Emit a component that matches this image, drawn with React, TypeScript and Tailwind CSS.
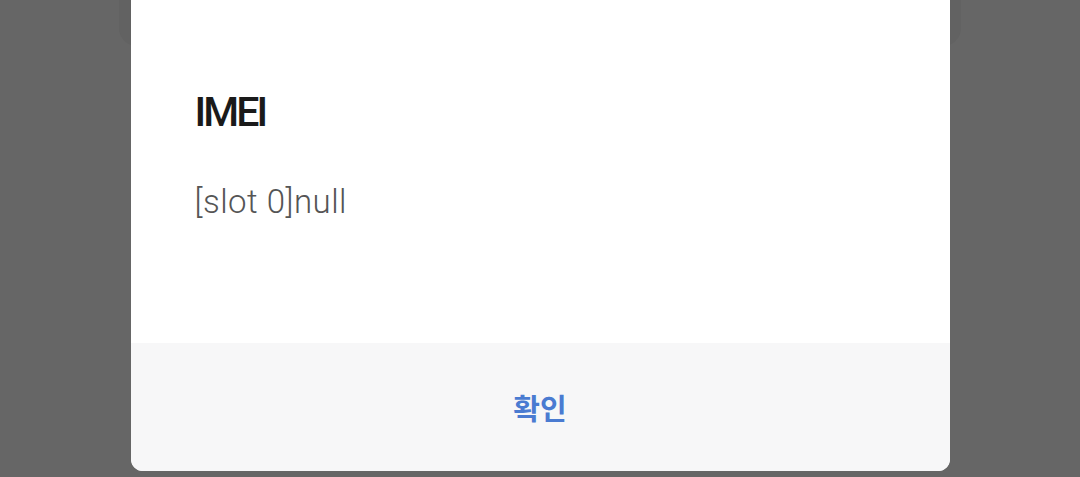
export default function App() {
  return (
    <div className="relative h-[477px] w-[1080px] overflow-hidden bg-[#666666]">
      {/* card peeking out behind the dim overlay */}
      <div className="absolute left-[119px] right-[119px] top-[-30px] h-[76px] rounded-[18px] bg-[#626262]" />

      <div className="relative mx-auto mt-[-20px] w-[819px] overflow-hidden rounded-[12px] bg-white">
        <div className="h-[363px] pl-[64px] pt-[112px]">
          <h1
            className="text-[41px] font-medium leading-none tracking-[-0.07em] text-[#1a1a1a]"
            style={{ fontFamily: "Roboto, 'Noto Sans CJK KR', sans-serif" }}
          >
            IMEI
          </h1>
          <p
            className="mt-[52px] text-[33px] font-light leading-none tracking-[0.015em] text-[#555555]"
            style={{ fontFamily: "Roboto, 'Noto Sans CJK KR', sans-serif" }}
          >
            [slot 0]null
          </p>
        </div>
        <div className="flex h-[128px] items-center justify-center bg-[#f7f7f8]">
          <button
            type="button"
            className="text-[29px] font-bold leading-none text-[#4a7bd1]"
            style={{ fontFamily: "'Noto Sans CJK KR', Roboto, sans-serif" }}
          >
            확인
          </button>
        </div>
      </div>
    </div>
  );
}
